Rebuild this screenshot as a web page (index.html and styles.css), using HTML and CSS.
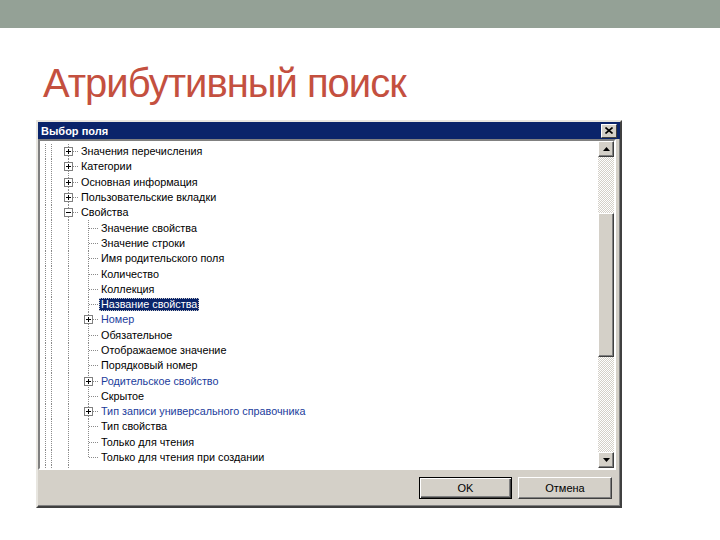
FILE: index.html
```html
<!DOCTYPE html>
<html lang="ru">
<head>
<meta charset="utf-8">
<title>Атрибутивный поиск</title>
<link rel="stylesheet" href="styles.css">
</head>
<body>
<div class="topbar"></div>
<h1 class="title">Атрибутивный поиск</h1>
<div class="dialog">
  <div class="titlebar">
    <span class="caption">Выбор поля</span>
    <span class="close"><svg width="8" height="7" viewBox="0 0 8 7"><path d="M0.5 0.5 L7.5 6.5 M7.5 0.5 L0.5 6.5" stroke="#000" stroke-width="1.6" fill="none"/></svg></span>
  </div>
  <div class="panel">
    <div class="tree">
      <div class="row"><span class="g0"></span><span class="node"><i class="box plus"></i></span><span class="label">Значения перечисления</span></div>
      <div class="row"><span class="g0"></span><span class="node"><i class="box plus"></i></span><span class="label">Категории</span></div>
      <div class="row"><span class="g0"></span><span class="node"><i class="box plus"></i></span><span class="label">Основная информация</span></div>
      <div class="row"><span class="g0"></span><span class="node"><i class="box plus"></i></span><span class="label">Пользовательские вкладки</span></div>
      <div class="row"><span class="g0"></span><span class="node"><i class="box minus"></i></span><span class="label">Свойства</span></div>
      <div class="row"><span class="g0"></span><span class="vline"></span><span class="node"></span><span class="label">Значение свойства</span></div>
      <div class="row"><span class="g0"></span><span class="vline"></span><span class="node"></span><span class="label">Значение строки</span></div>
      <div class="row"><span class="g0"></span><span class="vline"></span><span class="node"></span><span class="label">Имя родительского поля</span></div>
      <div class="row"><span class="g0"></span><span class="vline"></span><span class="node"></span><span class="label">Количество</span></div>
      <div class="row"><span class="g0"></span><span class="vline"></span><span class="node"></span><span class="label">Коллекция</span></div>
      <div class="row"><span class="g0"></span><span class="vline"></span><span class="node"></span><span class="label selected">Название свойства</span></div>
      <div class="row"><span class="g0"></span><span class="vline"></span><span class="node"><i class="box plus"></i></span><span class="label link">Номер</span></div>
      <div class="row"><span class="g0"></span><span class="vline"></span><span class="node"></span><span class="label">Обязательное</span></div>
      <div class="row"><span class="g0"></span><span class="vline"></span><span class="node"></span><span class="label">Отображаемое значение</span></div>
      <div class="row"><span class="g0"></span><span class="vline"></span><span class="node"></span><span class="label">Порядковый номер</span></div>
      <div class="row"><span class="g0"></span><span class="vline"></span><span class="node"><i class="box plus"></i></span><span class="label link">Родительское свойство</span></div>
      <div class="row"><span class="g0"></span><span class="vline"></span><span class="node"></span><span class="label">Скрытое</span></div>
      <div class="row"><span class="g0"></span><span class="vline"></span><span class="node"><i class="box plus"></i></span><span class="label link">Тип записи универсального справочника</span></div>
      <div class="row"><span class="g0"></span><span class="vline"></span><span class="node"></span><span class="label">Тип свойства</span></div>
      <div class="row"><span class="g0"></span><span class="vline"></span><span class="node"></span><span class="label">Только для чтения</span></div>
      <div class="row"><span class="g0"></span><span class="vline"></span><span class="node last"></span><span class="label">Только для чтения при создании</span></div>
      <div class="row"><span class="g0"></span><span class="node"><i class="box plus"></i></span><span class="label">Связи</span></div>
    </div>
    <div class="scroll">
      <span class="sbtn"><svg width="7" height="4" viewBox="0 0 7 4"><path d="M3.5 0 L7 4 L0 4 Z" fill="#000"/></svg></span>
      <span class="track track-top"></span>
      <span class="thumb"></span>
      <span class="track track-bottom"></span>
      <span class="sbtn"><svg width="7" height="4" viewBox="0 0 7 4"><path d="M0 0 L7 0 L3.5 4 Z" fill="#000"/></svg></span>
    </div>
  </div>
  <div class="buttons">
    <button class="btn default">OK</button>
    <button class="btn">Отмена</button>
  </div>
</div>
</body>
</html>
```

FILE: styles.css
```css
:root {
  --dotv: repeating-linear-gradient(to bottom, #8a8a8a 0 1px, transparent 1px 2px);
  --doth: repeating-linear-gradient(to right, #8a8a8a 0 1px, transparent 1px 2px);
  --face: #d4d0c8;
}
html, body {
  margin: 0;
  padding: 0;
  background: #fff;
}
body {
  width: 720px;
  height: 540px;
  overflow: hidden;
  font-family: "Liberation Sans", Arial, sans-serif;
}
.topbar {
  height: 28px;
  background: #94a196;
}
.title {
  margin: 32px 0 0 43px;
  font-family: "Liberation Sans", Arial, sans-serif;
  font-weight: normal;
  font-size: 40px;
  line-height: 46px;
  color: #c4503f;
  letter-spacing: -1px;
}
.dialog {
  margin: 14px 0 0 36px;
  width: 582px;
  height: 384px;
  border: 2px solid;
  border-color: #e8e6e0 #404040 #404040 #e8e6e0;
  box-shadow: inset -1px -1px #808080;
  background: var(--face);
  display: flex;
  flex-direction: column;
}
.titlebar {
  height: 17px;
  flex: none;
  background: #0a246a;
  display: flex;
  align-items: center;
  justify-content: space-between;
  padding: 0 3px 0 3px;
}
.caption {
  color: #fff;
  font-weight: bold;
  font-size: 11px;
}
.close {
  width: 14px;
  height: 12px;
  background: var(--face);
  border: 1px solid;
  border-color: #fff #404040 #404040 #fff;
  display: flex;
  align-items: center;
  justify-content: center;
}
.panel {
  height: 327px;
  flex: none;
  margin-right: 4px;
  border: 2px solid;
  border-color: #808080 #fff #fff #808080;
  display: flex;
  background: #fff;
}
.tree {
  flex: 1;
  overflow: hidden;
  padding-top: 3px;
  font-size: 10.8px;
  color: #000;
}
.row {
  height: 15.3px;
  display: flex;
  align-items: stretch;
  white-space: nowrap;
}
.g0 {
  width: 19px;
  flex: none;
  background: var(--dotv) 5px 0 / 1px 100% no-repeat, var(--dotv) 11px 0 / 1px 100% no-repeat;
}
.vline {
  width: 20px;
  flex: none;
  background: var(--dotv) 9px 0 / 1px 100% no-repeat;
}
.node {
  width: 20px;
  flex: none;
  display: flex;
  align-items: center;
  background: var(--doth) 10px 50% / 10px 1px no-repeat, var(--dotv) 9px 0 / 1px 100% no-repeat;
}
.node.last {
  background: var(--doth) 10px 50% / 10px 1px no-repeat, var(--dotv) 9px 0 / 1px 50% no-repeat;
}
.box {
  width: 7px;
  height: 7px;
  margin-left: 5px;
  border: 1px solid #808080;
  background: #fff;
}
.box.plus {
  background: linear-gradient(#000, #000) 1px 3px / 5px 1px no-repeat, linear-gradient(#000, #000) 3px 1px / 1px 5px no-repeat, #fff;
}
.box.minus {
  background: linear-gradient(#000, #000) 1px 3px / 5px 1px no-repeat, #fff;
}
.label {
  padding: 0 2px;
  align-self: center;
  line-height: 13px;
  height: 13px;
}
.label.link {
  color: #1b3c9c;
}
.label.selected {
  background: #0a246a;
  color: #fff;
  outline: 1px dotted #c8c8c8;
  outline-offset: -1px;
}
.scroll {
  width: 16px;
  flex: none;
  display: flex;
  flex-direction: column;
}
.sbtn {
  width: 14px;
  height: 14px;
  flex: none;
  background: var(--face);
  border: 1px solid;
  border-color: #fff #404040 #404040 #fff;
  box-shadow: inset -1px -1px #808080;
  display: flex;
  align-items: center;
  justify-content: center;
}
.track {
  background: repeating-conic-gradient(#fff 0 25%, #d4d0c8 0 50%) 0 0 / 2px 2px;
}
.track-top {
  height: 56px;
  flex: none;
}
.track-bottom {
  flex: 1;
}
.thumb {
  height: 142px;
  flex: none;
  background: var(--face);
  border: 1px solid;
  border-color: #fff #404040 #404040 #fff;
  box-shadow: inset -1px -1px #808080;
}
.buttons {
  flex: 1;
  display: flex;
  justify-content: flex-end;
  align-items: flex-start;
  gap: 6px;
  padding: 7px 8px 0 0;
}
.btn {
  width: 94px;
  height: 22px;
  padding: 0;
  font-family: "Liberation Sans", Arial, sans-serif;
  font-size: 11px;
  color: #000;
  background: var(--face);
  border: 1px solid;
  border-color: #fff #404040 #404040 #fff;
  box-shadow: inset -1px -1px #808080;
}
.btn.default {
  width: 93px;
  border: 1px solid #000;
  box-shadow: inset 1px 1px #fff, inset -1px -1px #404040, inset -2px -2px #808080;
}
```
